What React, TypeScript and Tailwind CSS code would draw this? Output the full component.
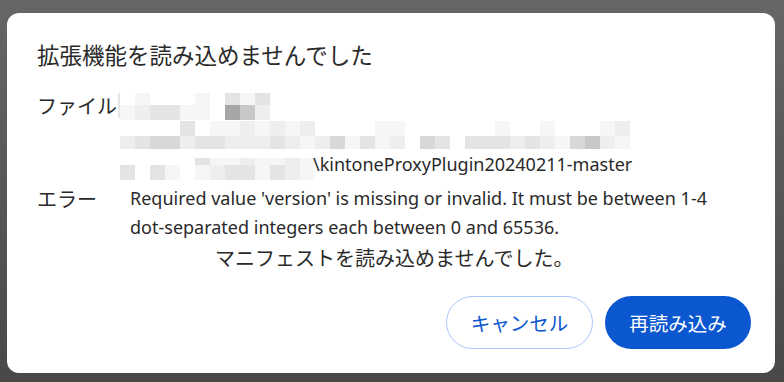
import React from 'react';

const SHADES = [
  'bg-transparent',
  'bg-[#f6f6f6]',
  'bg-[#eeeeee]',
  'bg-[#e4e4e4]',
  'bg-[#d8d8d8]',
  'bg-[#c8c8c8]',
  'bg-[#a6a6a6]',
];

const MosaicRow = ({ cells, h }: { cells: number[]; h: string }) => (
  <div className={`flex ${h}`}>
    {cells.map((c, i) => (
      <div key={i} className={`w-[15px] shrink-0 ${SHADES[c]}`} />
    ))}
  </div>
);

const jp = { fontFamily: '"Noto Sans CJK JP", sans-serif' };
const latin = { fontFamily: '"Noto Sans", "Noto Sans CJK JP", sans-serif' };

const App = () => {
  return (
    <div className="w-[784px] h-[382px] bg-gradient-to-b from-[#666666] to-[#484848] pl-[7px] pt-[13px]">
      <div className="w-[768px] h-[360px] bg-white rounded-[12px] flex flex-col pl-[30px] pr-6 pt-[25px] pb-6 text-[#2a2a2a]">
        <h1 className="text-[22.5px] leading-[33px] font-normal" style={jp}>
          拡張機能を読み込めませんでした
        </h1>

        {/* File row */}
        <div className="flex mt-[20px]">
          <div className="w-[81px] shrink-0 text-[20px] leading-[29.5px]" style={jp}>
            ファイル
          </div>
          <div className="flex flex-col">
            <div className="h-[29.5px] flex pt-[2px]">
              <div className="w-[2px] h-[25px] bg-[#e6e6e6]" />
              <div className="flex flex-col">
                <MosaicRow h="h-[12px]" cells={[0, 1, 0, 0, 0, 1, 0, 3, 1, 3]} />
                <MosaicRow h="h-[15px]" cells={[1, 2, 3, 3, 1, 1, 0, 6, 5, 2]} />
              </div>
            </div>
            <div className="h-[29.5px] flex flex-col pl-[2px]">
              <MosaicRow
                h="h-[15px]"
                cells={[0, 0, 0, 0, 3, 0, 1, 1, 2, 1, 2, 1, 2, 0, 0, 0, 0, 1, 1, 0, 0, 0, 0, 0, 0, 1, 0, 0, 1, 0, 0, 0, 1, 2]}
              />
              <MosaicRow
                h="h-[13px]"
                cells={[2, 3, 4, 4, 2, 3, 3, 2, 2, 2, 3, 2, 1, 2, 4, 1, 3, 1, 2, 0, 4, 3, 0, 3, 3, 3, 2, 3, 2, 1, 4, 5, 2, 1]}
              />
            </div>
            <div className="h-[29.5px] flex pl-[2px]">
              <div className="flex flex-col pt-[8px]">
                <MosaicRow h="h-[7px]" cells={[0, 0, 0, 0, 0, 3, 1, 1, 2, 1, 1, 2, 1]} />
                <MosaicRow h="h-[15px]" cells={[3, 0, 3, 1, 0, 1, 2, 3, 3, 1, 3, 2, 1]} />
              </div>
              <span className="text-[18px] leading-[29.5px] -ml-[2px]" style={latin}>
                \kintoneProxyPlugin20240211-master
              </span>
            </div>
          </div>
        </div>

        {/* Error row */}
        <div className="flex mt-[4px]">
          <div className="w-[93px] shrink-0 text-[20px] leading-[29.5px]" style={jp}>
            エラー
          </div>
          <div className="flex flex-col text-[18px] leading-[29.5px]" style={latin}>
            <span>Required value 'version' is missing or invalid. It must be between 1-4</span>
            <span>dot-separated integers each between 0 and 65536.</span>
            <span className="pl-[85px] text-[20px]" style={jp}>
              マニフェストを読み込めませんでした。
            </span>
          </div>
        </div>

        <div className="flex justify-end gap-3 mt-auto">
          <button
            className="w-[147px] h-[53px] rounded-full border border-[#a8c7fa] text-[#0b57d0] text-[19.5px] bg-white"
            style={jp}
          >
            キャンセル
          </button>
          <button
            className="w-[146px] h-[53px] rounded-full bg-[#0b57d0] text-white text-[19.5px]"
            style={jp}
          >
            再読み込み
          </button>
        </div>
      </div>
    </div>
  );
};

export default App;
